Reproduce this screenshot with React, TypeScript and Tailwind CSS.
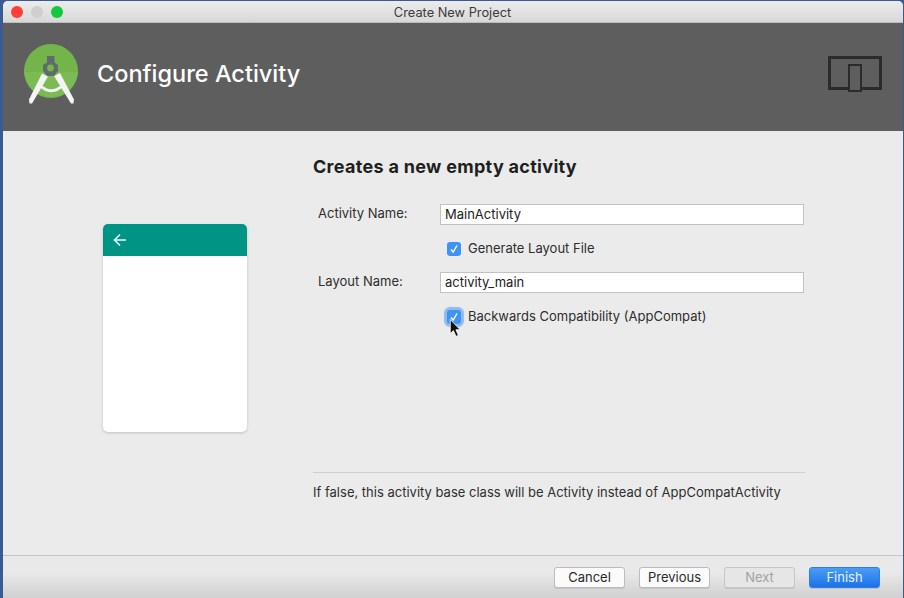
const font = 'font-["Inter","Liberation_Sans",sans-serif]';

function Logo() {
    return (
        <svg width="56" height="60" viewBox="0 0 56 60" className="shrink-0">
            {/* Green disc */}
            <circle cx="27" cy="27" r="27" fill="#74b54b" />
            <path d="M0.1 28 H53.9 A27 27 0 0 1 0.1 28 Z" fill="#7cbb54" />
            {/* Compass head */}
            <path d="M23 12 H30.5 V18.5 L34 21 V27 L30 32 H23 L19 27 V21 L23 18.5 Z" fill="#5f6b6b" />
            <circle cx="26.5" cy="24" r="3.4" fill="#76b54d" />
            {/* Legs */}
            <path d="M18 29.5 L24 32.5 L8 59.5 L5.5 59.5 L5 55.5 Z" fill="#f4f5f2" />
            <path d="M36 29 L30 32 L47 59.5 L49.5 59.5 L50 55.5 Z" fill="#f4f5f2" />
            <path d="M15 40.5 Q27 53 40 40.5" fill="none" stroke="#f4f5f2" strokeWidth="3" />
        </svg>
    );
}

function DeviceIcon() {
    return (
        <svg width="54" height="36" viewBox="0 0 54 36" className="shrink-0">
            <rect x="1.5" y="1.5" width="51" height="31" fill="none" stroke="#2b2b2b" strokeWidth="3" />
            <rect x="21" y="9" width="12" height="26" fill="#5e5e5e" stroke="#2b2b2b" strokeWidth="2" />
        </svg>
    );
}

function CheckBox({ focused }: { focused?: boolean }) {
    return (
        <span
            className={`flex size-[14px] shrink-0 items-center justify-center rounded-[3px] bg-[#3f93f2] ${
                focused ? 'shadow-[0_0_1px_3px_#8ebcef]' : ''
            }`}
        >
            <svg width="10" height="10" viewBox="0 0 10 10">
                <path d="M2 5.5 L4.2 8 L8 1.5" fill="none" stroke="#fff" strokeWidth="1.4" />
            </svg>
        </span>
    );
}

function FieldRow({ label, value }: { label: string; value: string }) {
    return (
        <div className="flex h-[21px] items-center">
            <span className="w-[127px] pb-px pl-[5px] text-[13px] text-[#2e2e2e]">{label}</span>
            <div className="flex h-[21px] w-[364px] items-center border border-[#c2c2c2] bg-white pl-1 text-[13px] text-[#222]">
                {value}
            </div>
        </div>
    );
}

function CheckRow({ label, focused }: { label: string; focused?: boolean }) {
    return (
        <div className="mt-px flex h-[20px] items-center pl-[134px]">
            <CheckBox focused={focused} />
            <span className="ml-[7px] text-[13px] text-[#2e2e2e]">{label}</span>
        </div>
    );
}

function FooterButton({ label, variant }: { label: string; variant?: 'disabled' | 'primary' }) {
    const styles =
        variant === 'primary'
            ? 'border-[#2f7fe0] bg-gradient-to-b from-[#4a9cf5] to-[#1b72e8] text-[#e6f0fb]'
            : variant === 'disabled'
              ? 'border-[#c6c6c6] bg-[#e6e6e6] text-[#a2a2a2]'
              : 'border-[#bcbcbc] bg-[#fbfbfb] text-[#2a2a2a]';
    return (
        <div
            className={`flex h-[21px] w-[71px] items-center justify-center rounded-[3px] border text-[13px] shadow-[0_1px_0_#c4c4c4] ${styles}`}
        >
            {label}
        </div>
    );
}

export default function App() {
    return (
        <div className={`h-[598px] w-[904px] overflow-hidden bg-[#3a5a94] pl-[3px] pt-px ${font}`}>
            <div className="relative flex h-[597px] w-[900px] flex-col overflow-hidden rounded-t-[5px] bg-[#ebebeb]">
                {/* Title bar */}
                <div className="relative flex h-[22px] shrink-0 items-center border-b border-[#bdbdbd] bg-gradient-to-b from-[#ececec] to-[#d8d8d8] pl-[8px]">
                    <div className="flex gap-[8px]">
                        <span className="size-3 rounded-full bg-[#fc3d39]" />
                        <span className="size-3 rounded-full bg-[#cfcfcf]" />
                        <span className="size-3 rounded-full bg-[#10c93f]" />
                    </div>
                    <span className="flex-1 pr-[61px] pt-[3px] text-center text-[12.8px] text-[#3a3a3a]">Create New Project</span>
                </div>

                {/* Header */}
                <div className="flex h-[108px] shrink-0 items-center bg-[#5e5e5e] pb-[7px] pl-[21px] pr-[21px]">
                    <Logo />
                    <span className="ml-[17px] text-[23.5px] font-medium text-white">Configure Activity</span>
                    <div className="ml-auto">
                        <DeviceIcon />
                    </div>
                </div>

                {/* Body */}
                <div className="flex flex-1">
                    <div className="w-[310px] pl-[100px] pt-[93px]">
                        <div className="h-[208px] w-[144px] overflow-hidden rounded-[5px] bg-white shadow-[0_1px_3px_rgba(0,0,0,0.18)]">
                            <div className="flex h-[32px] items-center bg-[#009484] pl-[10px]">
                                <svg width="14" height="14" viewBox="0 0 14 14">
                                    <path d="M13 7 H2 M7 1.5 L1.5 7 L7 12.5" fill="none" stroke="#e4fbf6" strokeWidth="1.6" />
                                </svg>
                            </div>
                        </div>
                    </div>

                    <div className="flex w-[492px] flex-col">
                        <h1 className="mt-[24px] text-[18px] font-bold leading-[24px] tracking-[0.3px] text-[#1f1f1f]">
                            Creates a new empty activity
                        </h1>
                        <div className="mt-[25px] flex flex-col gap-[13px]">
                            <FieldRow label="Activity Name:" value="MainActivity" />
                            <CheckRow label="Generate Layout File" />
                            <FieldRow label="Layout Name:" value="activity_main" />
                            <CheckRow label="Backwards Compatibility (AppCompat)" focused />
                        </div>
                        <div className="mt-[145px] border-t border-[#cfcfcf] pt-[11px] text-[13px] leading-[17px] text-[#2e2e2e]">
                            If false, this activity base class will be Activity instead of AppCompatActivity
                        </div>
                    </div>
                </div>

                {/* Footer */}
                <div className="flex h-[43px] shrink-0 items-start justify-end gap-[14px] border-t border-[#c4c4c4] bg-gradient-to-b from-[#e9e9e9] from-40% to-[#d0d0d0] pr-[23px] pt-[11px]">
                    <FooterButton label="Cancel" />
                    <FooterButton label="Previous" />
                    <FooterButton label="Next" variant="disabled" />
                    <FooterButton label="Finish" variant="primary" />
                </div>

                {/* Mouse cursor */}
                <svg width="13" height="19" viewBox="0 0 12 18" className="absolute left-[446px] top-[318px]">
                    <path d="M1 0.5 V14 L4 11 L6.5 16.5 L8.8 15.5 L6.4 10.2 L10.5 10.2 Z" fill="#111" stroke="#fff" strokeWidth="0.8" />
                </svg>
            </div>
        </div>
    );
}
